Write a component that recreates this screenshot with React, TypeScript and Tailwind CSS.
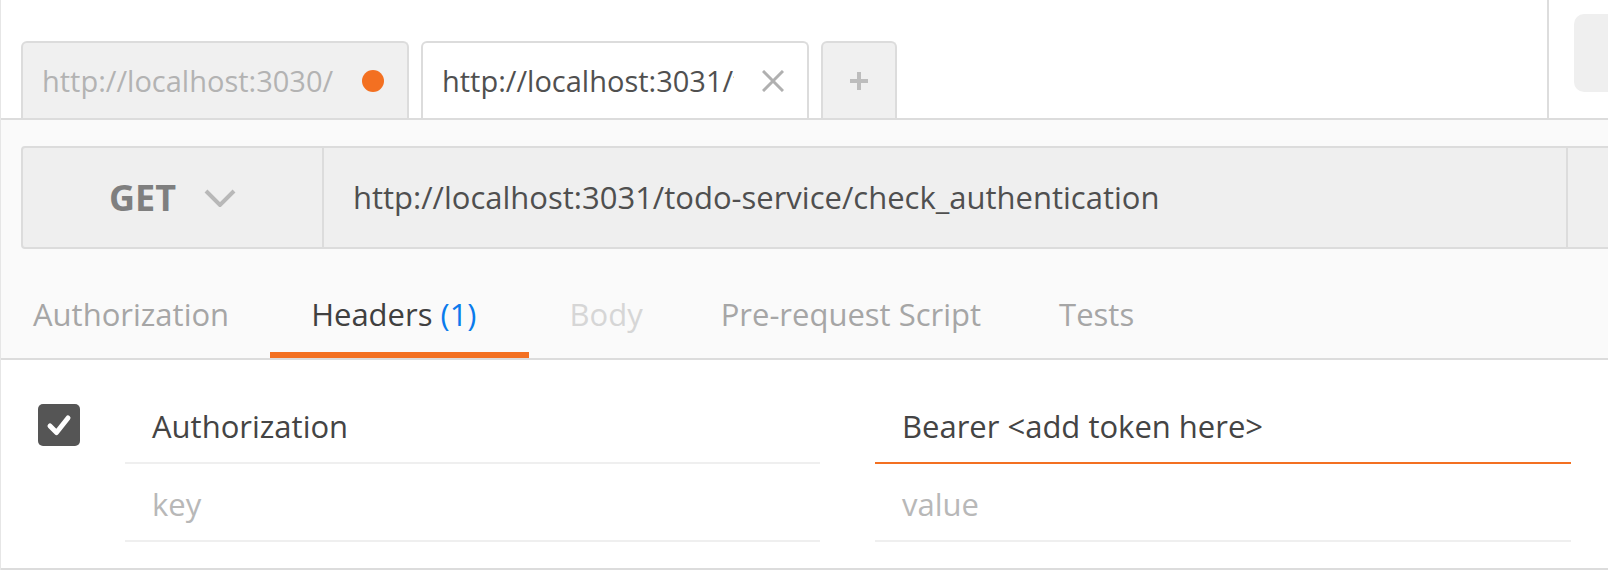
export default function App() {
  return (
    <div className="flex h-[570px] w-[1608px] flex-col overflow-hidden border-l border-[#e6e6e6] bg-white font-['Open_Sans',sans-serif]">
      {/* tab strip */}
      <div className="flex h-[120px] shrink-0 border-b-2 border-[#dcdcdc] bg-white">
        <div className="flex flex-1 items-end gap-[12px] pl-[20px]">
          <div className="flex h-[77px] w-[388px] items-center rounded-t-[6px] border-2 border-b-0 border-[#dcdcdc] bg-[#f0f0f0] pl-[19px] pr-[23px]">
            <span className="w-[292px] overflow-hidden whitespace-nowrap text-[29px] text-[#b3b3b3]">
              http://localhost:3030/check_authentication
            </span>
            <span className="ml-auto h-[22px] w-[22px] rounded-full bg-[#f37021]" />
          </div>
          <div className="flex h-[77px] w-[388px] items-center rounded-t-[6px] border-2 border-b-0 border-[#dcdcdc] bg-white pl-[19px] pr-[23px]">
            <span className="w-[292px] overflow-hidden whitespace-nowrap text-[29px] text-[#505050]">
              http://localhost:3031/todo-service/check_authentication
            </span>
            <svg className="ml-auto h-[22px] w-[22px]" viewBox="0 0 22 22" fill="none" stroke="#b0b0b0" strokeWidth={3}>
              <path d="M1 1l20 20M21 1L1 21" />
            </svg>
          </div>
          <div className="flex h-[77px] w-[76px] items-center justify-center rounded-t-[6px] border-2 border-b-0 border-[#dcdcdc] bg-[#f0f0f0]">
            <svg className="h-[20px] w-[20px]" viewBox="0 0 20 20" fill="none" stroke="#bdbdbd" strokeWidth={4}>
              <path d="M10 1v18M1 10h18" />
            </svg>
          </div>
        </div>
        <div className="w-[61px] shrink-0 border-l-2 border-[#dddddd] pl-[25px] pt-[14px]">
          <div className="flex h-[78px] w-[280px] items-center rounded-[10px] bg-[#efefef] pl-[36px] text-[31px] text-[#444444] whitespace-nowrap">
            No Environment
          </div>
        </div>
      </div>

      {/* request builder */}
      <div className="shrink-0 bg-[#fafafa]">
        <div className="pl-[20px] pt-[26px]">
          <div className="flex h-[103px] w-[1700px] rounded-[4px] border-2 border-[#dcdcdc] bg-[#efefef]">
            <div className="flex w-[299px] shrink-0 items-center justify-center gap-[28px]">
              <span className="text-[36px] font-bold leading-none text-[#7f7f7f]">GET</span>
              <svg className="h-[18px] w-[32px]" viewBox="0 0 32 18" fill="none" stroke="#b8b8b8" strokeWidth={4}>
                <path d="M2 2l14 14L30 2" />
              </svg>
            </div>
            <div className="flex w-[1244px] shrink-0 items-center border-l-2 border-[#dcdcdc] pl-[29px] text-[31px] text-[#4f4f4f] whitespace-nowrap">
              http://localhost:3031/todo-service/check_authentication
            </div>
            <div className="flex-1 border-l-2 border-[#dcdcdc]" />
          </div>
        </div>

        <div className="flex border-b-2 border-[#dcdcdc] text-[31px] leading-[42px] whitespace-nowrap">
          <div className="border-b-[6px] border-transparent pb-[17px] pl-[32px] pr-[41px] pt-[44px] text-[#a6a6a6]">Authorization</div>
          <div className="border-b-[6px] border-[#f37021] pb-[17px] pl-[41px] pr-[52px] pt-[44px] text-[#404040]">
            Headers <span className="text-[#0a7bec]">(1)</span>
          </div>
          <div className="border-b-[6px] border-transparent pb-[17px] pl-[41px] pr-[39px] pt-[44px] text-[#d6d6d6]">Body</div>
          <div className="border-b-[6px] border-transparent pb-[17px] px-[39px] pt-[44px] text-[#a6a6a6]">Pre-request Script</div>
          <div className="border-b-[6px] border-transparent pb-[17px] px-[39px] pt-[44px] text-[#a6a6a6]">Tests</div>
        </div>
      </div>

      {/* headers table */}
      <div className="flex-1 border-b-2 border-[#dcdcdc] bg-white pt-[26px] text-[31px] leading-[42px]">
        <div className="flex">
          <div className="w-[124px] shrink-0 pl-[37px] pt-[18px]">
            <div className="flex h-[42px] w-[42px] items-center justify-center rounded-[5px] bg-[#555555]">
              <svg className="h-[42px] w-[42px]" viewBox="0 0 42 42" fill="none" stroke="#ffffff" strokeWidth={5} strokeLinecap="round" strokeLinejoin="round">
                <path d="M12 22l6.5 6.5L30 14" />
              </svg>
            </div>
          </div>
          <div className="h-[78px] w-[695px] shrink-0 border-b-2 border-[#efefef] pl-[27px] pt-[19px] text-[#444444]">Authorization</div>
          <div className="ml-[55px] h-[78px] w-[696px] shrink-0 border-b-2 border-[#f37021] pl-[27px] pt-[19px] text-[#444444]">
            Bearer &lt;add token here&gt;
          </div>
        </div>
        <div className="flex">
          <div className="w-[124px] shrink-0" />
          <div className="h-[78px] w-[695px] shrink-0 border-b-2 border-[#efefef] pl-[27px] pt-[19px] text-[#b8b8b8]">key</div>
          <div className="ml-[55px] h-[78px] w-[696px] shrink-0 border-b-2 border-[#efefef] pl-[27px] pt-[19px] text-[#b8b8b8]">value</div>
        </div>
      </div>
    </div>
  );
}
